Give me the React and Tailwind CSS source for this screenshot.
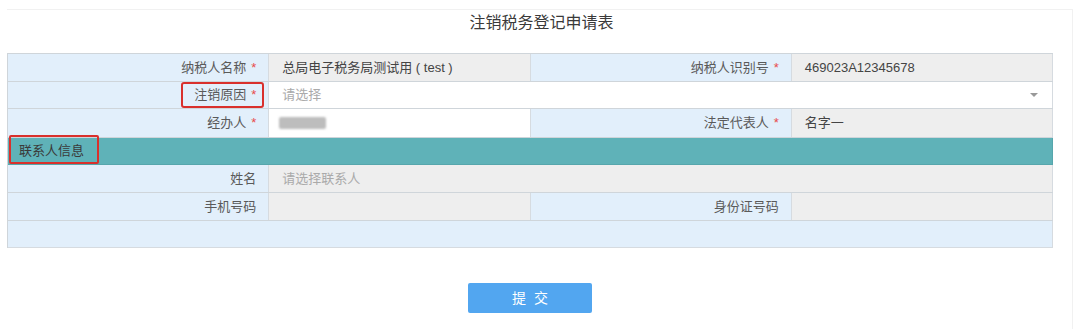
import React from "react";

const Star = () => <span className="ml-[5px] text-[#e84b4b]">*</span>;

const Label = ({ children, required, className = "" }) => (
  <div
    className={`relative flex items-center justify-end pr-[12px] bg-[#e2effb] text-[#5a5a5a] border-r border-[#d6dbe0] ${className}`}
  >
    <span>{children}</span>
    {required && <Star />}
  </div>
);

const Value = ({ children, className = "" }) => (
  <div className={`flex items-center pl-[13px] text-[#444] border-r border-[#d6dbe0] ${className}`}>
    {children}
  </div>
);

const App = () => {
  return (
    <div className="w-[1080px] h-[329px] bg-white text-[13px] font-['Liberation_Sans','Noto_Sans_CJK_SC',sans-serif]">
      <div className="pt-[9px]">
        <div className="ml-[7px] w-[1066px] border-t border-r border-[#f1f1f1] pb-[17px]">
          <div className="h-[26px] leading-[26px] text-center text-[16px] text-[#3a3a3a] pl-[4px]">
            注销税务登记申请表
          </div>

          <div className="mt-[17px] w-[1046px] border-t border-l border-[#cfd5da]">
            {/* row 1 */}
            <div className="grid grid-cols-4 h-[28px] border-b border-[#cfd5da]">
              <Label required>纳税人名称</Label>
              <Value className="bg-[#eeeeee]">总局电子税务局测试用 ( test )</Value>
              <Label required>纳税人识别号</Label>
              <Value className="bg-[#eeeeee]">469023A12345678</Value>
            </div>

            {/* row 2 */}
            <div className="grid grid-cols-4 h-[27px] border-b border-[#cfd5da]">
              <Label required>
                注销原因
                <span className="absolute top-0 bottom-0 right-[4px] w-[83px] border-2 border-[#d9302c] rounded-[3px]" />
              </Label>
              <div className="col-span-3 flex items-center justify-between pl-[13px] pr-[14px] bg-white border-r border-[#d6dbe0] text-[#aaa]">
                <span>请选择</span>
                <span className="w-0 h-0 border-l-[4px] border-r-[4px] border-t-[4px] border-l-transparent border-r-transparent border-t-[#999]" />
              </div>
            </div>

            {/* row 3 */}
            <div className="grid grid-cols-4 h-[29px] border-b border-[#cfd5da]">
              <Label required>经办人</Label>
              <Value className="bg-white">
                <div className="ml-[-3px] w-[47px] h-[12px] bg-[#bdbdbd] rounded-[2px] blur-[1px]" />
              </Value>
              <Label required>法定代表人</Label>
              <Value className="bg-[#eeeeee]">名字一</Value>
            </div>

            {/* contact header */}
            <div className="relative h-[27px] flex items-center pl-[11px] bg-[#5fb2b8] text-[#3a3a3a] border-b border-r border-[#56a6ac]">
              联系人信息
              <span className="absolute left-[1px] top-[-3px] w-[90px] h-[29px] border-2 border-[#d9302c] rounded-[2px]" />
            </div>

            {/* name row */}
            <div className="grid grid-cols-4 h-[28px] border-b border-[#cfd5da]">
              <Label>姓名</Label>
              <Value className="col-span-3 bg-[#eeeeee] text-[#aaa]">请选择联系人</Value>
            </div>

            {/* phone row */}
            <div className="grid grid-cols-4 h-[28px] border-b border-[#cfd5da]">
              <Label>手机号码</Label>
              <Value className="bg-[#eeeeee]" />
              <Label>身份证号码</Label>
              <Value className="bg-[#eeeeee]" />
            </div>

            {/* empty row */}
            <div className="h-[27px] bg-[#e2effb] border-b border-r border-[#d6dbe0]" />
          </div>

          <div className="w-[1046px] flex justify-center mt-[35px]">
            <button className="w-[124px] h-[30px] bg-[#52a6f0] rounded-[2px] text-white text-[14px] tracking-[8px] pl-[8px]">
              提交
            </button>
          </div>
        </div>
      </div>
    </div>
  );
};

export default App;
